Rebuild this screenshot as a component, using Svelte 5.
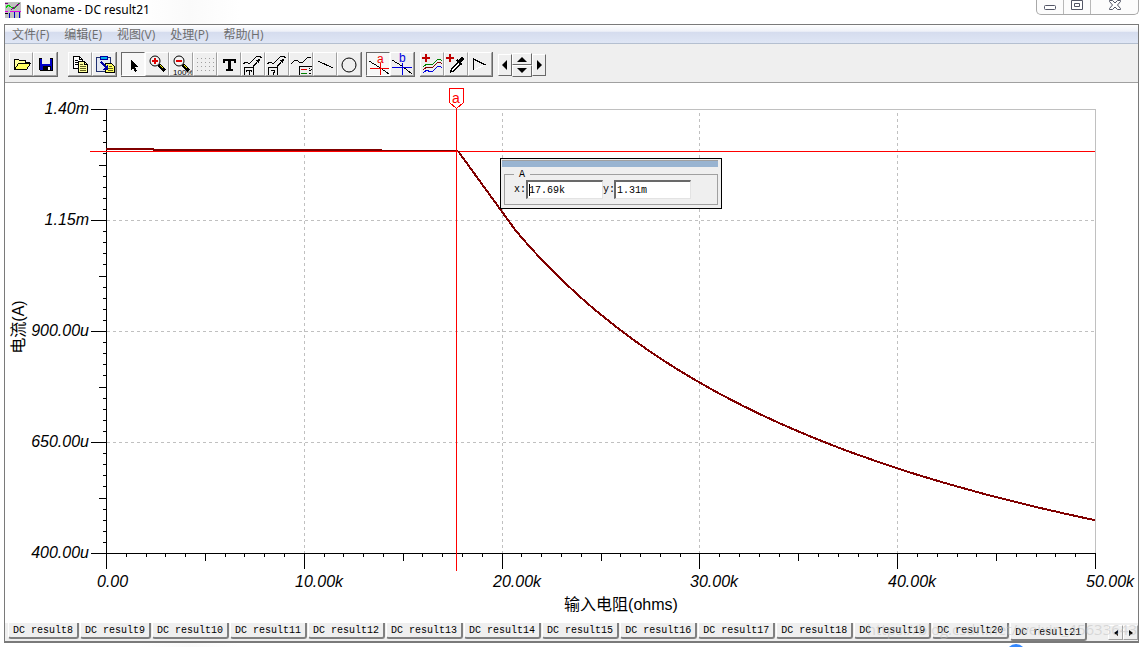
<script>
  const menus = ['文件(F)', '编辑(E)', '视图(V)', '处理(P)', '帮助(H)'];

  let active = $state('DC result21');
  const tabs = Array.from({ length: 14 }, (_, i) => `DC result${i + 8}`);

  let cursorX = $state('17.69k');
  let cursorY = $state('1.31m');

  // Plot area in drawing units
  const left = 106;
  const right = 1095;
  const top = 109;
  const bottom = 553;

  const px = (kOhm) => left + (kOhm / 50) * (right - left);
  const py = (mA) => bottom - (mA - 0.4) * (bottom - top);

  const yLabels = ['1.40m', '1.15m', '900.00u', '650.00u', '400.00u'];
  const xLabels = ['0.00', '10.00k', '20.00k', '30.00k', '40.00k', '50.00k'];

  const xTicks = Array.from({ length: 51 }, (_, i) => ({
    x: Math.round(px(i)),
    len: i % 10 === 0 ? 15 : i % 5 === 0 ? 7 : 3
  }));
  const yTicks = Array.from({ length: 41 }, (_, i) => ({
    y: Math.round(top + (i * (bottom - top)) / 40),
    len: i % 10 === 0 ? 15 : i % 5 === 0 ? 7 : 3
  }));

  // Load current once the regulator leaves constant current: 24 V over the series resistance
  const samples = [17.8, ...Array.from({ length: 60 }, (_, i) => 20.7 + (i * 29.3) / 59)];
  const curve = samples
    .map((r) => `${px(r).toFixed(1)},${py(23.97 / (r + 0.57)).toFixed(1)}`)
    .join(' ');

  const groups = [
    { name: 'file', items: ['open', 'save'] },
    { name: 'clip', items: ['copy', 'paste'] },
    { name: 'tools', items: ['pointer', 'zoom in', 'zoom 100%', 'grid', 'text', 'curve label', 'curve query', 'legend', 'line', 'circle'] },
    { name: 'cursors', items: ['cursor a', 'cursor b'] },
    { name: 'curves', items: ['add curves', 'pick curve', 'vector'] }
  ];
  const pressed = ['pointer', 'cursor a'];
</script>

{#snippet icon(name)}
  <svg width="24" height="24" viewBox="0 0 24 24" fill="none" stroke="#000" shape-rendering="crispEdges" aria-hidden="true">
    {#if name === 'open'}
      <path d="M5.5 17.5v-10h4l1 1h6v3" fill="#ffff9c" />
      <path d="M5.5 17.5l4-6h12l-4 6z" fill="#ffff60" />
      <path d="M17 10.5h4" />
    {:else if name === 'save'}
      <path d="M6.5 6.5h13v12h-12l-1-1z" fill="#0000c8" />
      <path d="M9 6h8v6H9z" fill="#efefef" stroke="none" />
      <path d="M10 14h8v4h-8z" fill="#000" stroke="none" />
      <path d="M15 15h2v3h-2z" fill="#fff" stroke="none" />
    {:else if name === 'copy'}
      <path d="M5.5 4.5h6l3 3v9h-9z" fill="#fff" />
      <path d="M11.5 4.5v3h3M7 8.5h3M7 10.5h3M7 12.5h3" />
      <path d="M10.5 9.5h6l3 3v8h-9z" fill="#ffff9c" />
      <path d="M16.500 9.5v3h3" />
      <path d="M12 12.5h3M12 14.5h6M12 16.5h6M12 18.5h6" stroke="#606020" />
    {:else if name === 'paste'}
      <path d="M4.5 5.5h14v14h-14z" fill="#e4e8f2" stroke="#203070" />
      <path d="M8 4h7v3H8z" fill="#00b0e8" stroke="#0000a0" />
      <path d="M13.5 11.5h6l3 3v6h-9z" fill="#ffff60" />
      <path d="M17 14.5h3M16 16.5h5M16 18.5h5" stroke="#606020" />
      <path d="M9 10l5 5" stroke="#0000a0" stroke-width="2" />
      <path d="M16 12v6h-6z" fill="#0000a0" stroke="none" />
    {:else if name === 'pointer'}
      <path d="M10 8v10l2-2 2 4 2-1-2-4h3z" fill="#000" stroke="none" />
    {:else if name === 'zoom in' || name === 'zoom 100%'}
      <circle cx="10" cy="9" r="5" fill="#f4f4f4" shape-rendering="auto" />
      <path d="M7 9h6" stroke="#e00000" stroke-width="2" />
      {#if name === 'zoom in'}
        <path d="M10 6v6" stroke="#e00000" stroke-width="2" />
      {/if}
      <path d="M14 13l6 6" stroke-width="3" />
      <path d="M15 13l3 3" stroke="#ffff00" />
      {#if name === 'zoom 100%'}
        <text x="4" y="23" class="tiny">100%</text>
      {/if}
    {:else if name === 'grid'}
      <path d="M4 6.5h17M4 10.5h17M4 14.5h17M4 18.5h17" stroke="#a0a0a0" stroke-dasharray="1 3" />
    {:else if name === 'text'}
      <path d="M6 7h13v4h-2V9h-3v8h2v2H9v-2h2V9H8v2H6z" fill="#000" stroke="none" />
    {:else if name === 'curve label' || name === 'curve query'}
      <path d="M2 12l3-2 2 1h2l6-6 3-1 3 2" />
      <path d="M11 16l7-8" />
      <path d="M18.5 7.500l-3 1 2 2z" fill="#000" />
      <path d="M3.5 24v-8.500h9V24" />
      {#if name === 'curve label'}
        <path d="M5.500 19.500v-1.500h5v1.500M8 18v5" />
      {:else}
        <path d="M6 18.500h3v2l-1 1v1" />
      {/if}
    {:else if name === 'legend'}
      <path d="M2 12l4-4 3 1 2 2 3-1 4-4 4-1" />
      <path d="M10.5 24v-9.500H23" />
      <path d="M12 17.5h6" stroke="#e00000" />
      <path d="M12 21.500h6" stroke="#008000" />
      <path d="M20 16.500h1M22 17.500h1M20 18.500h2M20 21.500h2" />
    {:else if name === 'line'}
      <path d="M5 9l15 7" />
    {:else if name === 'circle'}
      <circle cx="12" cy="13" r="7" shape-rendering="auto" />
    {:else if name === 'cursor a'}
      <path d="M3 9l10 6 10 7" />
      <path d="M4 16.500h20M14.5 11v12" stroke="#f00000" />
      <text x="11" y="11" class="letter red">a</text>
    {:else if name === 'cursor b'}
      <path d="M2 8l10 6 10 8" />
      <path d="M2 15.500h20M12.5 11v12" stroke="#0000e0" />
      <text x="9" y="10" class="letter blue">b</text>
    {:else if name === 'add curves'}
      <path d="M2 6h8M6 2v8" stroke="#c00000" stroke-width="2" />
      <path d="M3 15l4-3 3 1 3-1 4-4 3-1 2 2" stroke="#008000" />
      <path d="M3 18l4-3 3 1 3-1 4-4 3-1 2 2" stroke="#800000" />
      <path d="M3 21l4-3 3 2 3-1 4-4 3-1 2 2" stroke="#0000e0" />
    {:else if name === 'pick curve'}
      <path d="M2 6h8M6 2v8" stroke="#c00000" stroke-width="2" />
      <path d="M6.500 20l1-3 7-7 2 2-7 7z" fill="#fff" />
      <path d="M13 8l5 5" stroke-width="2" />
      <path d="M15 10l4-4" stroke-width="4" />
    {:else if name === 'vector'}
      <path d="M5.5 18V7l12 6" />
      <path d="M17 13L6 18" stroke="#fff" />
    {/if}
  </svg>
{/snippet}

<div class="app">
  <header class="titlebar">
    <svg width="16" height="16" viewBox="0 0 16 16" shape-rendering="crispEdges" fill="none" aria-hidden="true">
      <path d="M0 0h16v16H0z" fill="#c0c0c0" />
      <path d="M1 6l2-3 3 2 3 2 5-6" stroke="#00d000" />
      <path d="M0 1l3 1M6 8l4-3 5-4" stroke="#800080" />
      <path d="M0 9.5h3M5 9.5h11" stroke="#e000e0" />
      <path d="M4.5 11v5M9.5 10v6M14.5 10v6" stroke="#0000c0" />
      <path d="M0 11.5h3" stroke="#000" />
    </svg>
    <h1>Noname - DC result21</h1>
    <div class="caption">
      <button aria-label="Minimize">
        <svg width="14" height="12" viewBox="0 0 14 12"><rect x="1.5" y="5.5" width="11" height="4" rx="1" fill="#fff" stroke="#535666" /></svg>
      </button>
      <button aria-label="Restore">
        <svg width="14" height="12" viewBox="0 0 14 12"><path d="M1.5 .5h11v9h-11zM4.5 3.5h5v3h-5z" fill="#fff" stroke="#535666" /></svg>
      </button>
      <button aria-label="Close" class="close">
        <svg width="14" height="12" viewBox="0 0 14 12"><path d="M1.5 .5h3L7 3 9.5 .5h3v1L9.500 5l3 3.500v1h-3L7 7 4.500 9.500h-3v-1L4.500 5l-3-3.500z" fill="#fff" stroke="#535666" /></svg>
      </button>
    </div>
  </header>

  <main class="window">
    <nav class="menubar">
      {#each menus as menu}
        <button>{menu}</button>
      {/each}
    </nav>

    <div class="toolbar">
      {#each groups as group}
        <div class="group {group.name}">
          {#each group.items as item}
            <button class="tool" class:pressed={pressed.includes(item)} aria-label={item}>
              {@render icon(item)}
            </button>
          {/each}
        </div>
      {/each}
      <div class="stepper">
        <button class="tool side" aria-label="Left"><svg width="6" height="10" viewBox="0 0 6 10"><path d="M5 0v10L0 5z" /></svg></button>
        <div class="updown">
          <button class="tool" aria-label="Up"><svg width="10" height="6" viewBox="0 0 10 6"><path d="M0 6h10L5 1z" /></svg></button>
          <button class="tool" aria-label="Down"><svg width="10" height="6" viewBox="0 0 10 6"><path d="M0 0h10L5 5z" /></svg></button>
        </div>
        <button class="tool side" aria-label="Right"><svg width="6" height="10" viewBox="0 0 6 10"><path d="M1 0v10l5-5z" /></svg></button>
      </div>
    </div>

    <section class="plot">
      <svg class="chart" viewBox="5 83 1133 540" role="img" aria-label="DC result21">
        <g shape-rendering="crispEdges">
          <path d="M107 109.5H1095.5V553" fill="none" stroke="#c0c0c0" />
          {#each [304, 502, 699, 897] as x}
            <path d="M{x + 0.5} 113V553" stroke="#c0c0c0" stroke-dasharray="3 3" />
          {/each}
          {#each [220, 331, 442] as y}
            <path d="M107 {y + 0.5}H1095" stroke="#c0c0c0" stroke-dasharray="3 3" />
          {/each}
          <path d="M106.5 109V568M91 553.5H1096" stroke="#000" />
          {#each xTicks as t}
            <path d="M{t.x + 0.5} 554v{t.len}" stroke="#000" />
          {/each}
          {#each yTicks as t}
            <path d="M106 {t.y + 0.5}h-{t.len}" stroke="#000" />
          {/each}
          <path d="M90 151.5H1095" stroke="#f00" />
          <path d="M106 149h48M153 150h229" stroke="#800000" stroke-width="2" />
          <path d="M382 150.5h76" stroke="#800000" />
          <polyline points={curve} fill="none" stroke="#800000" stroke-width="2" />
          <path d="M456.5 108V571" stroke="#f00" />
          <path d="M449.5 88.5h14v14l-7 6-7-6z" fill="#fff" stroke="#f00" />
        </g>
        <text x="456" y="103" class="flag">a</text>
        {#each yLabels as label, i}
          <text x="89" y={114 + i * 111} class="tick end">{label}</text>
        {/each}
        {#each xLabels as label, i}
          <text x={Math.round(px(i * 10)) - 9} y="587" class="tick">{label}</text>
        {/each}
        <text x="621" y="610" class="axis">输入电阻(ohms)</text>
        <text transform="translate(24 327) rotate(-90)" class="axis">电流(A)</text>
      </svg>

      <div class="readout">
        <div class="grip"></div>
        <fieldset>
          <legend>A</legend>
          <label for="cx">x:</label><input id="cx" bind:value={cursorX} />
          <label for="cy">y:</label><input id="cy" bind:value={cursorY} />
          <span class="caret"></span>
        </fieldset>
      </div>
    </section>

    <footer class="tabs">
      {#each tabs as tab}
        <button class="tab" class:active={tab === active} onclick={() => (active = tab)}>{tab}</button>
      {/each}
      <div class="scroll">
        <button class="tool" aria-label="Previous tabs"><svg width="4" height="6" viewBox="0 0 4 6"><path d="M4 0v6L0 3z" /></svg></button>
        <button class="tool" aria-label="Next tabs"><svg width="4" height="6" viewBox="0 0 4 6"><path d="M0 0v6l4-3z" /></svg></button>
      </div>
    </footer>
  </main>
  <span class="watermark">https://blog.csdn.net/weixin_45633643</span>
  <span class="orb"></span>
</div>

<style>
  :global(body) { margin: 0; }
  * { box-sizing: border-box; }
  button { font: inherit; color: inherit; margin: 0; padding: 0; border: 0; background: none; }
  svg { display: block; }

  .app {
    position: relative;
    display: flex;
    flex-direction: column;
    height: 100vh;
    padding: 0 6px 4px 4px;
    overflow: hidden;
    background: linear-gradient(90deg, #fff 140px, #fafafa 190px, #fff 240px);
    font-family: "Noto Sans", "Noto Sans CJK SC", sans-serif;
  }

  .titlebar { display: flex; align-items: flex-start; height: 24px; padding: 2px 0 0 1px; flex: none; }
  h1 { flex: 1; margin: 0 0 0 5px; font-size: 12px; line-height: 16px; font-weight: 400; color: #000; }
  .caption {
    display: flex;
    height: 15px;
    margin-top: -2px;
    border: 1px solid #a8a8a8;
    border-top: 0;
    border-radius: 0 0 5px 5px;
    background: #fcfcfc;
  }
  .caption button { display: flex; justify-content: center; width: 27px; border-right: 1px solid #b8b8b8; }
  .caption .close { width: 47px; border: 0; }

  .window {
    flex: 1;
    min-height: 0;
    display: flex;
    flex-direction: column;
    border: 1px solid #7a7a7a;
    border-bottom-width: 2px;
    background: #efefef;
  }

  .menubar {
    display: flex;
    flex: none;
    gap: 15px;
    height: 19px;
    padding-left: 7px;
    border-bottom: 1px solid #b4bfd0;
    background: linear-gradient(#fff, #eef1f8 35%, #d5dcee 40%, #dfe6f5);
    color: #6d6d6d;
    font-family: "Open Sans", "Noto Sans CJK SC", sans-serif;
    font-size: 12px;
    line-height: 18px;
  }
  .menubar button { padding-top: 1px; }

  .toolbar {
    display: flex;
    flex: none;
    height: 39px;
    padding: 8px 0 0 4px;
    border-bottom: 1px solid #a0a0a0;
  }
  .group, .stepper { display: flex; height: 25px; }
  .group { border-right: 1px solid #696969; border-bottom: 1px solid #696969; }
  .clip { margin-left: 10px; }
  .tools, .cursors { margin-left: 4px; }
  .curves, .stepper { margin-left: 5px; }
  .stepper { align-items: center; }
  .tool {
    display: flex;
    align-items: center;
    justify-content: center;
    width: 24px;
    height: 24px;
    border: 1px solid;
    border-color: #fff #a0a0a0 #a0a0a0 #fff;
    background: #efefef;
  }
  .tool svg { flex: none; }
  .group .tool { overflow: hidden; }
  .tool.pressed { border-color: #696969 #fff #fff #696969; background: #f7f7f7; }
  .stepper .tool { border-right-color: #696969; border-bottom-color: #696969; }
  .stepper .side { width: 14px; height: 22px; }
  .updown .tool { width: 20px; height: 12px; }

  .plot { position: relative; flex: 1; min-height: 0; background: #fff; }
  .chart { width: 100%; height: 100%; }
  .chart text { fill: #000; font-family: "Liberation Sans", "Noto Sans CJK SC", sans-serif; }
  .chart .tick { font-size: 16px; font-style: italic; }
  .chart .end { text-anchor: end; }
  .chart .axis { font-size: 16px; text-anchor: middle; }
  .chart .flag { font-size: 14px; text-anchor: middle; fill: #f00; }
  .tiny { font: 8px "Liberation Sans", sans-serif; fill: #000; stroke: none; }
  .letter { font: 12px "Liberation Sans", sans-serif; stroke: none; }
  .red { fill: #f00000; }
  .blue { fill: #0000e0; }

  .readout {
    position: absolute;
    left: 495px;
    top: 75px;
    width: 222px;
    height: 51px;
    padding: 1px 3px 2px 1px;
    border: 1px solid #000;
    background: #efefef;
    font: 10px/14px "Liberation Mono", monospace;
  }
  .grip { height: 7px; background: #99b4d1; border-top: 1px solid #a0a0a0; }
  fieldset {
    position: relative;
    display: flex;
    align-items: center;
    min-width: 0;
    height: 38px;
    margin: 0 0 0 2px;
    padding: 0 8px 6px 9px;
    border: 1px solid #a0a0a0;
  }
  legend { padding: 2px 5px 0; line-height: 12px; }
  .readout label { width: 12px; flex: none; }
  .readout label + input + label { width: 11px; }
  input {
    width: 77px;
    height: 19px;
    padding: 0 1px;
    border: 1px solid;
    border-color: #696969 #e3e3e3 #e3e3e3 #696969;
    border-width: 2px 1px 1px 2px;
    background: #fff;
    color: #000;
    font: 10px/14px "Liberation Mono", monospace;
    outline: 0;
  }
  .caret { position: absolute; left: 24px; top: 3px; width: 1px; height: 12px; background: #000; }

  .tabs {
    display: flex;
    flex: none;
    gap: 1px;
    height: 18px;
    padding-left: 3px;
    font: 10px/14px "Liberation Mono", monospace;
    color: #000;
  }
  .tab {
    height: 16px;
    padding: 2px 4px 0;
    border: solid;
    border-width: 0 2px 2px 1px;
    border-color: #808080 #808080 #808080 #fff;
    border-radius: 0 0 3px 3px;
    line-height: 12px;
    white-space: nowrap;
  }
  .active { height: 18px; padding-top: 4px; background: #efefef; }
  .scroll { display: flex; margin: 2px 0 0 auto; }
  .scroll .tool { width: 15px; height: 15px; }

  .watermark {
    position: absolute;
    right: 8px;
    bottom: 8px;
    font: 15px/20px "Open Sans", sans-serif;
    color: rgba(190, 190, 190, 0.5);
    pointer-events: none;
  }
  .orb {
    position: absolute;
    left: 1006px;
    bottom: -17px;
    width: 20px;
    height: 20px;
    border-radius: 50%;
    background: #3388ff;
  }
</style>
